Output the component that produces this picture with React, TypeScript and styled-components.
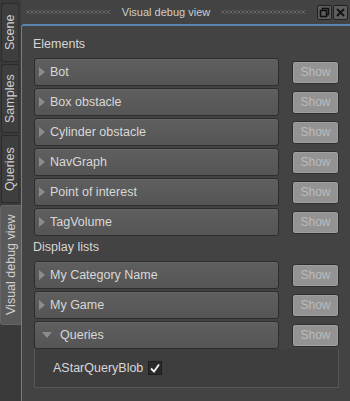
import React from 'react';
import styled, { createGlobalStyle } from 'styled-components';

const GlobalStyle = createGlobalStyle`
  html, body {
    margin: 0;
    padding: 0;
    background: #434343;
  }
  * {
    box-sizing: border-box;
  }
`;

const Window = styled.div`
  width: 350px;
  height: 401px;
  display: flex;
  overflow: hidden;
  background: #434343;
  font-family: 'Liberation Sans', Arial, sans-serif;
  font-size: 12px;
  color: #d2d2d2;
`;

const TabStrip = styled.div`
  width: 21px;
  flex: none;
  display: flex;
  flex-direction: column;
  gap: 2px;
  padding-top: 3px;
  background: #3a3a3a;
`;

const Tab = styled.div<{ $active?: boolean; $h: number }>`
  height: ${(p) => p.$h}px;
  margin-left: ${(p) => (p.$active ? 0 : 1)}px;
  margin-right: ${(p) => (p.$active ? 0 : 2)}px;
  display: flex;
  align-items: center;
  justify-content: center;
  writing-mode: vertical-rl;
  transform: rotate(180deg);
  background: ${(p) => (p.$active ? '#5a5a5a' : '#3e3e3e')};
  border: 1px solid ${(p) => (p.$active ? '#666' : '#2c2c2c')};
  border-left: 1px solid ${(p) => (p.$active ? '#5a5a5a' : '#333')};
  border-radius: 0 3px 3px 0;
  color: #cfcfcf;
  font-size: 12.5px;
`;

const Main = styled.div`
  flex: 1;
  display: flex;
  flex-direction: column;
`;

const TitleBar = styled.div`
  height: 24px;
  flex: none;
  display: flex;
  align-items: center;
  gap: 11px;
  padding: 0 2px 0 5px;
`;

const Grip = styled.div`
  flex: 1;
  height: 4px;
  background-image: radial-gradient(circle, #666 0.8px, transparent 1.2px);
  background-size: 4px 4px;
  position: relative;
  &::after {
    content: '';
    position: absolute;
    inset: 0;
    background-image: radial-gradient(circle, #5a5a5a 0.8px, transparent 1.1px);
    background-size: 4px 4px;
    background-position: 2px 2px;
  }
`;

const Title = styled.div`
  color: #cdcdcd;
  font-size: 11px;
  white-space: nowrap;
`;

const TitleButtons = styled.div`
  display: flex;
  gap: 1px;
`;

const TitleButton = styled.div`
  width: 15px;
  height: 15px;
  border: 1px solid #222;
  border-radius: 2px;
  background: #5e5e5e;
  display: flex;
  align-items: center;
  justify-content: center;
`;

const Frame = styled.div`
  flex: 1;
  border-top: 2px solid #5b84b0;
  border-left: 1px solid #5b84b0;
  border-top-left-radius: 3px;
  padding: 7px 11px 0 12px;
  display: flex;
  flex-direction: column;
`;

const SectionLabel = styled.div`
  height: 22px;
  line-height: 22px;
  font-size: 12.5px;
  color: #d6d6d6;
  margin-left: -1px;
`;

const List = styled.div`
  display: flex;
  flex-direction: column;
  gap: 2px;
  margin: 3px 0 0;
`;

const Row = styled.div`
  display: flex;
  align-items: center;
  gap: 13px;
`;

const Header = styled.div<{ $open?: boolean }>`
  flex: 1;
  height: 28px;
  display: flex;
  align-items: center;
  gap: ${(p) => (p.$open ? 8 : 5)}px;
  padding-left: ${(p) => (p.$open ? 7 : 4)}px;
  background: linear-gradient(#5f5f5f, #555555);
  border: 1px solid #2d2d2d;
  border-radius: 3px;
  box-shadow: inset 0 1px 0 #666;
  font-size: 12.5px;
  color: #d8d8d8;
`;

const ShowButton = styled.div`
  width: 47px;
  height: 23px;
  flex: none;
  display: flex;
  align-items: center;
  justify-content: center;
  background: #939393;
  border: 1px solid #2e2e2e;
  border-radius: 3px;
  box-shadow: inset 0 0 0 1px #a0a0a0;
  color: #bbbbbb;
  font-size: 12px;
`;

const Expanded = styled.div`
  height: 39px;
  margin-top: -2px;
  display: flex;
  align-items: center;
  gap: 5px;
  padding-left: 18px;
  background: #3e3e3e;
  border: 1px solid #575757;
  border-top: none;
  font-size: 12.5px;
  color: #d8d8d8;
`;

const CheckBox = styled.div`
  width: 14px;
  height: 14px;
  background: #2a2a2a;
  border: 1px solid #1e1e1e;
  display: flex;
  align-items: center;
  justify-content: center;
`;

const Arrow: React.FC<{ open?: boolean }> = ({ open }) =>
  open ? (
    <svg width="10" height="6" viewBox="0 0 10 6">
      <path d="M0 0 L10 0 L5 6 Z" fill="#8c8c8c" />
    </svg>
  ) : (
    <svg width="6" height="10" viewBox="0 0 6 10">
      <path d="M0 0 L6 5 L0 10 Z" fill="#8c8c8c" />
    </svg>
  );

const elements = ['Bot', 'Box obstacle', 'Cylinder obstacle', 'NavGraph', 'Point of interest', 'TagVolume'];
const displayLists = ['My Category Name', 'My Game'];

const App: React.FC = () => {
  return (
    <>
      <GlobalStyle />
      <Window>
        <TabStrip>
          <Tab $h={59}>Scene</Tab>
          <Tab $h={69}>Samples</Tab>
          <Tab $h={68}>Queries</Tab>
          <Tab $h={120} $active>
            Visual debug view
          </Tab>
        </TabStrip>
        <Main>
          <TitleBar>
            <Grip />
            <Title>Visual debug view</Title>
            <Grip />
            <TitleButtons>
              <TitleButton>
                <svg width="11" height="11" viewBox="0 0 11 11">
                  <rect x="3.5" y="1.5" width="6" height="6" fill="none" stroke="#111" strokeWidth="1.6" />
                  <rect x="1.5" y="3.5" width="6" height="6" fill="#5e5e5e" stroke="#111" strokeWidth="1.6" />
                </svg>
              </TitleButton>
              <TitleButton>
                <svg width="11" height="11" viewBox="0 0 11 11">
                  <path d="M2 2 L9 9 M9 2 L2 9" stroke="#111" strokeWidth="1.8" />
                </svg>
              </TitleButton>
            </TitleButtons>
          </TitleBar>
          <Frame>
            <SectionLabel>Elements</SectionLabel>
            <List>
              {elements.map((name) => (
                <Row key={name}>
                  <Header>
                    <Arrow />
                    {name}
                  </Header>
                  <ShowButton>Show</ShowButton>
                </Row>
              ))}
            </List>
            <SectionLabel>Display lists</SectionLabel>
            <List>
              {displayLists.map((name) => (
                <Row key={name}>
                  <Header>
                    <Arrow />
                    {name}
                  </Header>
                  <ShowButton>Show</ShowButton>
                </Row>
              ))}
              <Row>
                <Header $open>
                  <Arrow open />
                  Queries
                </Header>
                <ShowButton>Show</ShowButton>
              </Row>
              <Expanded>
                AStarQueryBlob
                <CheckBox>
                  <svg width="10" height="10" viewBox="0 0 10 10">
                    <path d="M1 5.5 L4 8.5 L9 1.5" fill="none" stroke="#f2f2f2" strokeWidth="1.8" />
                  </svg>
                </CheckBox>
              </Expanded>
            </List>
          </Frame>
        </Main>
      </Window>
    </>
  );
};

export default App;
